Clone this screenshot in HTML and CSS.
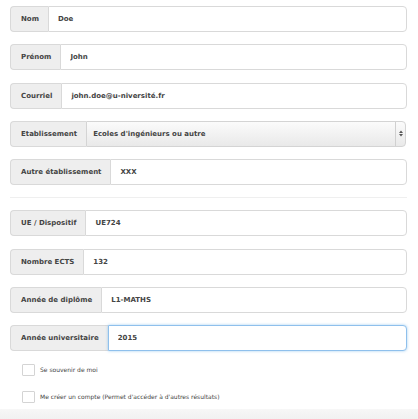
FILE: index.html
```html
<!DOCTYPE html>
<html lang="fr">
<head>
<meta charset="utf-8">
<title>Formulaire</title>
<link rel="stylesheet" href="styles.css">
</head>
<body>
<form class="form">
  <div class="group"><span class="addon">Nom</span><input class="field" type="text" value="Doe"></div>
  <div class="group"><span class="addon">Prénom</span><input class="field" type="text" value="John"></div>
  <div class="group"><span class="addon">Courriel</span><input class="field" type="text" value="john.doe@u-niversité.fr"></div>
  <div class="group"><span class="addon">Etablissement</span><div class="select"><span class="select-text">Ecoles d'ingénieurs ou autre</span><span class="select-arrow"><svg width="4" height="7" viewBox="0 0 4 7"><path d="M0 3 L2 0.5 L4 3 Z M0 4 L2 6.5 L4 4 Z" fill="#555"/></svg></span></div></div>
  <div class="group"><span class="addon">Autre établissement</span><input class="field" type="text" value="XXX"></div>
  <div class="sep"></div>
  <div class="group"><span class="addon">UE / Dispositif</span><input class="field" type="text" value="UE724"></div>
  <div class="group"><span class="addon">Nombre ECTS</span><input class="field" type="text" value="132"></div>
  <div class="group"><span class="addon">Année de diplôme</span><input class="field" type="text" value="L1-MATHS"></div>
  <div class="group"><span class="addon">Année universitaire</span><input class="field field-focus" type="text" value="2015"></div>
  <label class="check"><span class="box"></span><span class="check-label">Se souvenir de moi</span></label>
  <label class="check"><span class="box"></span><span class="check-label">Me créer un compte (Permet d'accéder à d'autres résultats)</span></label>
</form>
<div class="footer"></div>
</body>
</html>
```

FILE: styles.css
```css
* { box-sizing: border-box; }
html, body { margin: 0; padding: 0; background: #fff; }
body {
  font-family: "DejaVu Sans", Verdana, sans-serif;
  color: #444;
  height: 419px;
  overflow: hidden;
}
.form {
  padding: 6px 11px 0 10px;
  height: 409px;
  margin: 0;
}
.group {
  display: flex;
  height: 26px;
  margin-bottom: 12.3px;
}
.addon {
  display: flex;
  align-items: center;
  padding: 0 9px 0 10px;
  background: #eee;
  border: 1px solid #d9d9d9;
  border-right: 0;
  border-radius: 4px 0 0 4px;
  font-weight: bold;
  font-size: 7px;
  color: #444;
  white-space: nowrap;
}
.field {
  flex: 1;
  min-width: 0;
  height: 26px;
  margin: 0;
  border: 1px solid #d9d9d9;
  border-radius: 0 4px 4px 0;
  padding: 0 0 0 9px;
  font-family: "DejaVu Sans", Verdana, sans-serif;
  font-weight: bold;
  font-size: 7px;
  color: #444;
  background: #fff;
  outline: none;
}
.field-focus {
  border-color: #8fc0ec;
  box-shadow: 0 0 3px rgba(102, 175, 233, 0.6);
}
.select {
  flex: 1;
  display: flex;
  align-items: stretch;
  margin-right: 1px;
  border: 1px solid #d4d4d4;
  border-radius: 0 4px 4px 0;
  background: linear-gradient(#fbfbfb, #e9e9e9);
  font-weight: bold;
  font-size: 7px;
  color: #444;
}
.select-text {
  flex: 1;
  display: flex;
  align-items: center;
  padding-left: 6px;
}
.select-arrow {
  width: 10px;
  display: flex;
  align-items: center;
  justify-content: center;
  border-left: 1px solid #d0d0d0;
}
.sep {
  height: 1px;
  background: #efefef;
  margin: -0.5px 0 12.5px;
}
.check {
  display: flex;
  align-items: center;
  height: 12px;
  margin-left: 12px;
  margin-top: 1px;
  margin-bottom: 15px;
  font-size: 6px;
  color: #444;
}
.box {
  width: 13px;
  height: 12px;
  border: 1px solid #d4d4d4;
  border-radius: 1px;
  background: #fff;
  margin-right: 5px;
}
.footer {
  height: 10px;
  background: linear-gradient(#f7f7f7, #f1f1f1);
}
```
